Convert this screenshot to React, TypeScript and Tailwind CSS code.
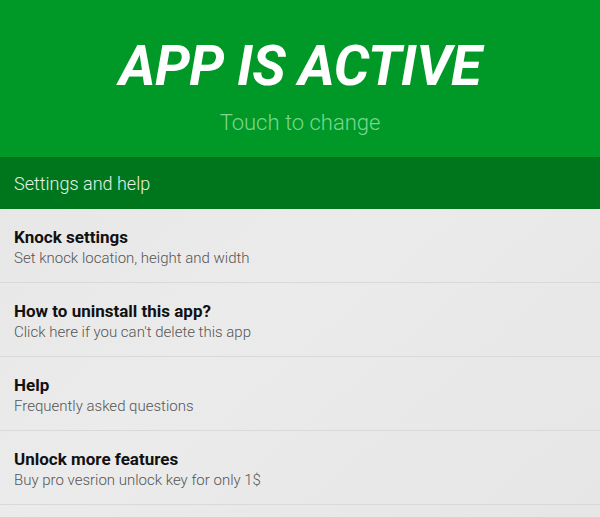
const items = [
  { title: "Knock settings", sub: "Set knock location, height and width" },
  { title: "How to uninstall this app?", sub: "Click here if you can't delete this app" },
  { title: "Help", sub: "Frequently asked questions" },
  { title: "Unlock more features", sub: "Buy pro vesrion unlock key for only 1$" },
];

export default function App() {
  return (
    <div
      className="w-[600px] h-[517px] overflow-hidden flex flex-col bg-gradient-to-br from-[#e5e5e5] via-[#ebebeb] to-[#e6e6e6]"
      style={{ fontFamily: "Roboto, 'Liberation Sans', sans-serif" }}
    >
      <div className="h-[157px] bg-[#009927] flex flex-col items-center shrink-0">
        <h1 className="mt-[31px] text-white text-[56px] leading-[70px] font-bold italic tracking-[-0.6px]">
          APP IS ACTIVE
        </h1>
        <p className="mt-[6px] text-[#7dd68f] text-[22px] leading-[32px] font-light">Touch to change</p>
      </div>
      <div className="h-[52px] bg-[#00761c] flex items-center px-[14px] shrink-0">
        <span className="text-[#e6f2e8] text-[18px] font-light">Settings and help</span>
      </div>
      <div className="flex flex-col">
        {items.map((it) => (
          <div key={it.title} className="h-[74px] border-b border-[#d9d9d9] px-[14px] pt-[17px]">
            <p className="text-[#111] text-[17px] leading-[22px] font-bold">{it.title}</p>
            <p className="text-[#555] text-[15px] leading-[20px] font-light">{it.sub}</p>
          </div>
        ))}
      </div>
    </div>
  );
}
